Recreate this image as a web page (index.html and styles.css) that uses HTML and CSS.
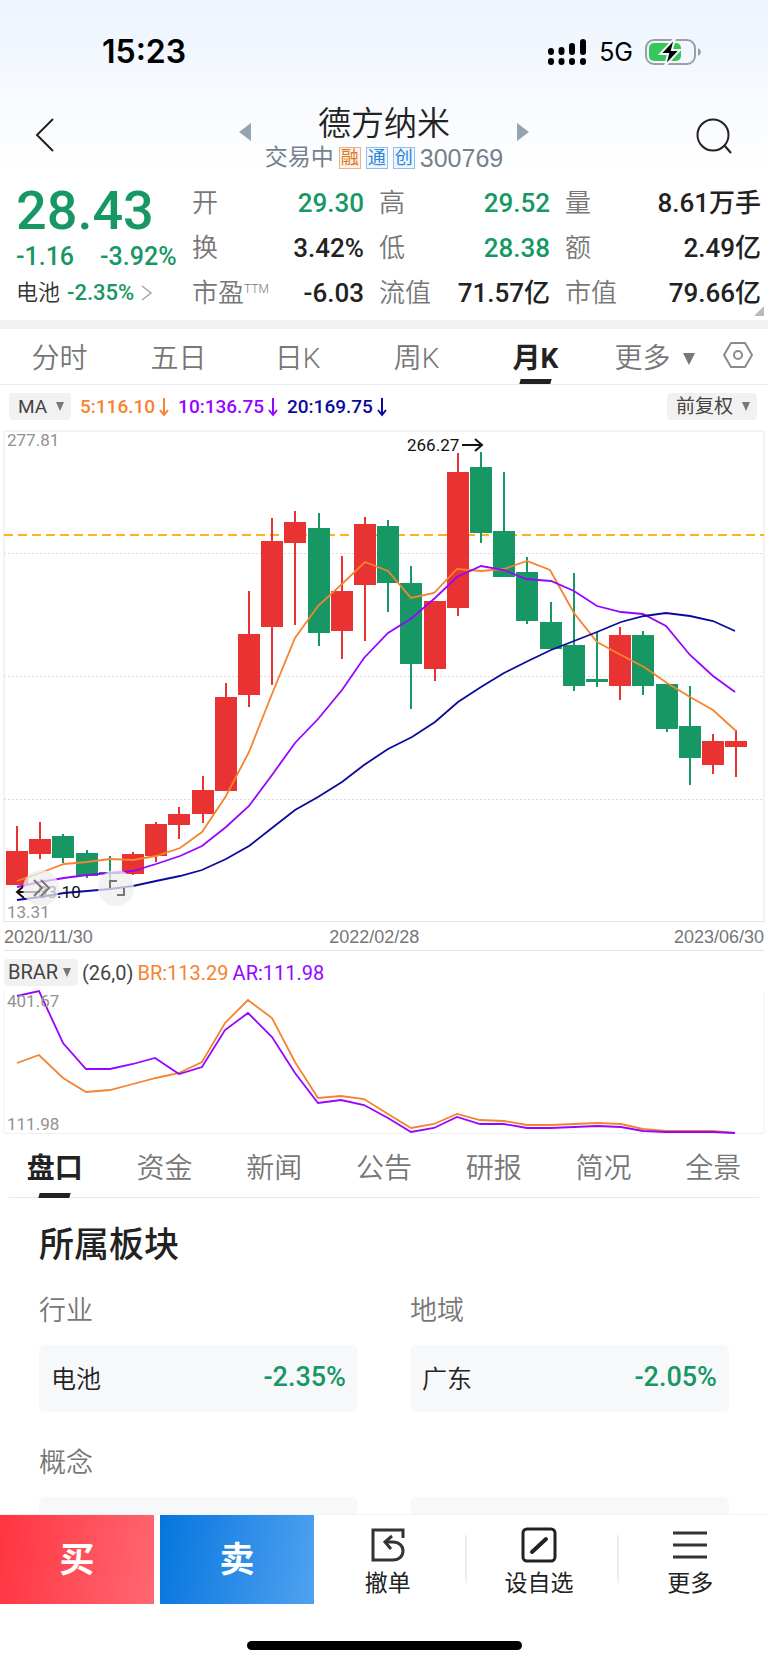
FILE: index.html
```html
<!DOCTYPE html>
<html lang="zh-CN">
<head>
    <meta charset="UTF-8">
    <meta name="viewport" content="width=device-width, initial-scale=1.0">
    <title>德方纳米 300769</title>
    <link rel="stylesheet" href="styles.css">
</head>
<body>
    <header class="top">
        <div class="status-bar">
            <span class="clock">15:23</span>
            <div class="status-icons">
                <svg width="40" height="28" viewBox="0 0 40 28">
                    <g stroke="#000" stroke-width="6" stroke-linecap="round">
                        <path d="M4 13v1M14.500 12v2M25 8v6M36 4v10"/>
                        <path d="M4 23v1M14.500 23v1M25 23v1M36 23v1"/>
                    </g>
                </svg>
                <span class="network">5G</span>
                <svg width="56" height="28" viewBox="0 0 56 28">
                    <rect x="1" y="2" width="49" height="24" rx="8" fill="none" stroke="#9a9ea5" stroke-width="2"/>
                    <path d="M53 10q3 1.500 3 4t-3 4z" fill="#9a9ea5"/>
                    <rect x="4" y="5" width="32" height="18" rx="5" fill="#34c759"/>
                    <path d="M30 0 15 16h8l-3 12 15-16h-8z" fill="#000" stroke="#f7faff" stroke-width="2"/>
                </svg>
            </div>
        </div>
        <div class="title-bar">
            <button class="icon-btn" aria-label="返回">
                <svg width="20" height="36" viewBox="0 0 20 36"><path d="M18 2 2 18l16 16" fill="none" stroke="#222" stroke-width="2"/></svg>
            </button>
            <div class="title-group">
                <button class="icon-btn" aria-label="上一只">
                    <svg width="12" height="18" viewBox="0 0 12 18"><path d="M12 0v18L0 9z" fill="#97a3ae"/></svg>
                </button>
                <div class="title">
                    <h1>德方纳米</h1>
                    <div class="subtitle">
                        <span>交易中</span>
                        <span class="tag tag-orange">融</span>
                        <span class="tag">通</span>
                        <span class="tag">创</span>
                        <span class="code">300769</span>
                    </div>
                </div>
                <button class="icon-btn" aria-label="下一只">
                    <svg width="12" height="18" viewBox="0 0 12 18"><path d="M0 0v18l12-9z" fill="#97a3ae"/></svg>
                </button>
            </div>
            <button class="icon-btn" aria-label="搜索">
                <svg width="38" height="38" viewBox="0 0 38 38" fill="none" stroke="#222" stroke-width="2"><circle cx="18" cy="18" r="15.500"/><path d="m29 28 7 8"/></svg>
            </button>
        </div>
    </header>

    <section class="quote">
        <div class="price-col">
            <div class="price">28.43</div>
            <div class="change"><span>-1.16</span><span>-3.92%</span></div>
            <a class="sector" href="#sectors">电池 <span class="sector-rate">-2.35%</span>
                <svg width="12" height="16" viewBox="0 0 12 16"><path d="m1 1 9 7-9 7" fill="none" stroke="#a0a8b0" stroke-width="1.500"/></svg>
            </a>
        </div>
        <dl class="stats">
            <div><dt>开</dt><dd class="down">29.30</dd></div>
            <div><dt>高</dt><dd class="down">29.52</dd></div>
            <div><dt>量</dt><dd>8.61万手</dd></div>
            <div><dt>换</dt><dd>3.42%</dd></div>
            <div><dt>低</dt><dd class="down">28.38</dd></div>
            <div><dt>额</dt><dd>2.49亿</dd></div>
            <div><dt>市盈<sup>TTM</sup></dt><dd>-6.03</dd></div>
            <div><dt>流值</dt><dd>71.57亿</dd></div>
            <div><dt>市值</dt><dd>79.66亿</dd></div>
        </dl>
    </section>

    <nav class="period-tabs">
        <button>分时</button>
        <button>五日</button>
        <button>日K</button>
        <button>周K</button>
        <button class="active">月K</button>
        <button>更多<i class="caret"></i></button>
        <button class="settings" aria-label="设置">
            <svg width="30" height="28" viewBox="0 0 30 28" fill="none" stroke="#8a8a8a" stroke-width="2"><path d="M8 2h14l7 12-7 12H8L1 14z"/><circle cx="15" cy="14" r="4"/></svg>
        </button>
    </nav>

    <section class="legend">
        <label class="picker"><select aria-label="主图指标"><option>MA</option></select></label>
        <span class="ma ma5">5:116.10<svg width="10" height="20" viewBox="0 0 10 20"><path d="M5 1v17M1 13l4 5 4-5"/></svg></span>
        <span class="ma ma10">10:136.75<svg width="10" height="20" viewBox="0 0 10 20"><path d="M5 1v17M1 13l4 5 4-5"/></svg></span>
        <span class="ma ma20">20:169.75<svg width="10" height="20" viewBox="0 0 10 20"><path d="M5 1v17M1 13l4 5 4-5"/></svg></span>
        <label class="picker adjust"><select aria-label="复权"><option>前复权</option></select></label>
    </section>

    <section class="chart">
        <svg class="plot" viewBox="0 0 768 492">
            <path class="frame" d="M4 492V1h760v491"/>
            <path class="frame" d="M4 491.500h760"/>
            <path class="grid" d="M4 123.500h760M4 246.500h760M4 369.500h760"/>
            <path class="cost" d="M4 105h760"/>
            <g id="candles"></g>
            <polyline class="line ma5" points="17,451 40,443 64,434 87,432 110,429 133,430 156,426 180,418 202,402 226,366 249,322 272,264 295,208 318,176 342,154 365,132 388,141 411,168 434,163 457,139 481,141 504,139 527,131 550,140 574,183 597,212 621,225 644,237 667,253 690,267 713,280 736,301"/>
            <polyline class="line ma10" points="17,457 40,452 64,448 87,445 110,443 133,441 156,434 180,426 202,416 226,397 249,376 272,345 295,313 318,289 342,260 364,228 388,203 412,188 435,168 457,147 481,136 504,140 526,149 551,151 574,161 597,176 621,182 643,184 666,196 690,225 713,246 735,262"/>
            <polyline class="line ma20" points="17,470 40,467 64,463 87,461 110,459 133,456 156,451 180,446 202,440 226,429 249,416 272,398 295,380 318,367 342,352 364,335 388,319 412,307 435,292 458,272 481,257 504,243 528,231 551,220 574,211 597,202 621,192 644,186 666,183 690,186 713,191 735,201"/>
            <text class="axis" x="7" y="16">277.81</text>
            <text class="axis" x="7" y="488">13.31</text>
            <text class="mark" x="407" y="21">266.27</text>
            <path class="arrow" d="M462 15h20M475 9l7 6-7 6"/>
            <text class="mark" x="38" y="468">33.10</text>
            <path class="arrow" d="M40 462H17M24 456l-7 6 7 6"/>
            <g class="tool">
                <circle cx="41" cy="458" r="18"/>
                <path d="m34 450 8 8-8 8M41 450l8 8-8 8"/>
            </g>
            <g class="tool">
                <circle cx="116" cy="458" r="18"/>
                <path d="M110 458v-7h7M117 465h7v-7"/>
            </g>
        </svg>
        <div class="dates"><span>2020/11/30</span><span class="mid">2022/02/28</span><span>2023/06/30</span></div>
    </section>

    <section class="legend legend-brar">
        <label class="picker"><select aria-label="副图指标"><option>BRAR</option></select></label>
        <span>(26,0)</span>
        <span class="ma5">BR:113.29</span>
        <span class="ma10">AR:111.98</span>
    </section>

    <section class="chart">
        <svg class="plot" viewBox="0 0 768 144">
            <path class="frame light" d="M4 1v142.500h760V1"/>
            <polyline class="line ma5" points="17,73 39,65 63,88 86,102 110,100 133,94 156,88 179,83 202,72 225,33 248,10 272,28 295,72 318,108 341,106 364,109 388,124 411,138 434,134 457,124 480,130 504,131 527,135 551,135 574,134 597,133 621,134 643,139 666,141 690,141 713,141 735,143"/>
            <polyline class="line ma10" points="17,6 39,1 63,53 86,79 110,79 133,74 155,68 179,84 202,77 225,40 248,23 272,47 295,83 318,113 341,110 364,115 388,128 411,142 434,138 457,127 480,134 504,134 527,138 551,138 574,137 597,136 621,137 643,141 666,142 690,142 713,142 735,143"/>
            <text class="axis" x="7" y="17">401.67</text>
            <text class="axis" x="7" y="140">111.98</text>
        </svg>
    </section>

    <nav class="info-tabs">
        <button class="active">盘口</button>
        <button>资金</button>
        <button>新闻</button>
        <button>公告</button>
        <button>研报</button>
        <button>简况</button>
        <button>全景</button>
    </nav>

    <main class="sectors" id="sectors">
        <h2>所属板块</h2>
        <div class="sector-grid">
            <div>
                <h3>行业</h3>
                <a class="card" href="#"><span>电池</span><span class="rate">-2.35%</span></a>
            </div>
            <div>
                <h3>地域</h3>
                <a class="card" href="#"><span>广东</span><span class="rate">-2.05%</span></a>
            </div>
        </div>
        <h3>概念</h3>
        <div class="sector-grid">
            <div class="card"></div>
            <div class="card"></div>
        </div>
    </main>

    <footer class="trade-bar">
        <div class="actions">
            <button class="buy">买</button>
            <button class="sell">卖</button>
            <div class="tools">
                <button>
                    <svg width="36" height="36" viewBox="0 0 36 36" fill="none" stroke="#333" stroke-width="3"><path d="M33 11V3H3v30h20c6 0 10-4 10-9s-4-9-10-9h-6"/><path d="m22 9-7 6 6 7"/></svg>
                    撤单
                </button>
                <button>
                    <svg width="36" height="36" viewBox="0 0 36 36" fill="none" stroke="#222" stroke-width="3"><rect x="2" y="2" width="32" height="32" rx="4"/><path d="M11 25 25 12" stroke-width="4" stroke-linecap="round"/></svg>
                    设自选
                </button>
                <button>
                    <svg width="36" height="36" viewBox="0 0 36 36" fill="none" stroke="#333" stroke-width="3"><path d="M1 6h34M1 18h34M1 30h34"/></svg>
                    更多
                </button>
            </div>
        </div>
        <div class="home-indicator"></div>
    </footer>

    <script src="script.js"></script>
</body>
</html>
```
FILE: script.js
```js
// [up, wick top, body top, body bottom, wick bottom] for each month
const candles = [
    [1, 396, 421, 455, 455], [1, 392, 409, 424, 429], [0, 404, 406, 428, 433], [0, 420, 423, 446, 448],
    [0, 426, 442, 444, 450], [1, 422, 424, 444, 445], [1, 392, 394, 426, 432], [1, 377, 384, 395, 409],
    [1, 346, 360, 384, 393], [1, 253, 267, 361, 361], [1, 161, 204, 265, 277], [1, 88, 111, 197, 255],
    [1, 81, 92, 113, 195], [0, 83, 98, 203, 216], [1, 126, 161, 201, 229], [1, 87, 94, 155, 211],
    [0, 90, 96, 153, 182], [0, 136, 153, 234, 279], [1, 171, 171, 239, 251], [1, 23, 42, 178, 186],
    [0, 22, 37, 103, 113], [0, 42, 101, 147, 147], [0, 127, 142, 191, 194], [0, 172, 192, 219, 219],
    [0, 143, 215, 256, 261], [0, 202, 249, 252, 257], [1, 197, 205, 256, 270], [0, 201, 205, 256, 265],
    [0, 254, 254, 299, 302], [0, 256, 296, 328, 355], [1, 304, 311, 335, 344], [1, 300, 311, 317, 347]
];

const step = 23.2;

document.getElementById('candles').innerHTML = candles.map(([up, high, top, bottom, low], i) => {
    const x = Math.round(17 + i * step);
    return `<g class="${up ? 'candle-up' : 'candle-down'}">
        <rect x="${x - 1}" y="${high}" width="2" height="${low - high}"/>
        <rect x="${x - 11}" y="${top}" width="22" height="${bottom - top}"/>
    </g>`;
}).join('');
```
FILE: styles.css
```css
:root {
    --green: #179764;
    --red: #e93232;
    --text: #222;
    --muted: #777;
    --orange: #f5832f;
    --purple: #9605ff;
    --navy: #0a0a9c;
    --chip: #f1f1f1;
}

* {
    margin: 0;
    padding: 0;
    box-sizing: border-box;
}

body {
    background: #fff;
    color: var(--text);
    font-family: Roboto, "Noto Sans CJK SC", sans-serif;
    padding-bottom: 90px;
}

button, select {
    font: inherit;
    color: inherit;
    background: none;
    border: none;
    cursor: pointer;
}

a {
    color: inherit;
    text-decoration: none;
}

svg {
    display: block;
}

/* header */
.top {
    height: 180px;
    background: linear-gradient(#edf4fe, #fff 172px);
}

.status-bar {
    height: 104px;
    padding: 0 67px 0 102px;
    display: flex;
    align-items: center;
    justify-content: space-between;
}

.clock {
    font: 600 32px/40px Inter, sans-serif;
    color: #000;
}

.status-icons {
    display: flex;
    align-items: center;
    gap: 12px;
}

.network {
    font: 400 25px/32px Inter, sans-serif;
    color: #000;
}

.title-bar {
    display: grid;
    grid-template-columns: 1fr auto 1fr;
    align-items: start;
    height: 76px;
    padding: 0 35px;
}

.icon-btn {
    display: flex;
    margin-top: 13px;
}

.icon-btn:last-child {
    justify-self: end;
}

.title-group {
    display: flex;
    justify-content: space-between;
    align-items: start;
    width: 290px;
}

.title-group .icon-btn {
    margin-top: 19px;
}

.title {
    text-align: center;
    white-space: nowrap;
}

h1 {
    font-size: 33px;
    line-height: 40px;
    font-weight: 350;
}

.subtitle {
    display: flex;
    align-items: center;
    justify-content: center;
    gap: 5px;
    color: #74818e;
    font-size: 23px;
    line-height: 28px;
}

.tag {
    width: 22px;
    height: 22px;
    border: 1px solid #8fbfea;
    background: #eef6fd;
    color: #2b86d9;
    font-size: 18px;
    line-height: 20px;
}

.tag-orange {
    border-color: #eab182;
    background: #fdf3ea;
    color: #dc7623;
}

.code {
    font-family: "Liberation Sans", sans-serif;
    font-size: 25px;
}

/* quote */
.quote {
    display: grid;
    grid-template-columns: 161fr 569fr;
    gap: 15px;
    height: 149px;
    padding: 0 7px 0 16px;
    border-bottom: 9px solid #f1f1f1;
    position: relative;
}

/* expand corner */
.quote::after {
    content: "";
    position: absolute;
    right: 4px;
    bottom: 4px;
    border-left: 10px solid transparent;
    border-bottom: 10px solid #b8b8b8;
}

.price-col {
    color: var(--green);
    font-weight: 500;
    white-space: nowrap;
}

.price {
    font-size: 54px;
    line-height: 62px;
}

.change {
    display: flex;
    gap: 26px;
    font-size: 25px;
    line-height: 30px;
}

.sector {
    display: flex;
    align-items: center;
    gap: 7px;
    font-size: 22px;
    line-height: 42px;
    font-weight: 350;
    color: #333;
}

.sector-rate {
    color: var(--green);
    font-weight: 500;
}

.stats {
    display: grid;
    grid-template-columns: 172fr 171fr 196fr;
    grid-template-rows: repeat(3, 45px);
    column-gap: 15px;
}

.stats div {
    display: flex;
    justify-content: space-between;
    font-size: 26px;
    line-height: 46px;
    white-space: nowrap;
}

.stats dt {
    color: var(--muted);
    font-weight: 350;
}

.stats dd {
    font-weight: 500;
}

.stats .down {
    color: var(--green);
}

sup {
    font-size: 12px;
    line-height: 12px;
    vertical-align: 9px;
}

/* period tabs */
.period-tabs {
    display: grid;
    grid-template-columns: repeat(6, 119fr) 54fr;
    height: 56px;
    border-bottom: 1px solid #e9e9f3;
    font-size: 28px;
    color: var(--muted);
}

.period-tabs button, .info-tabs button {
    display: flex;
    align-items: center;
    justify-content: center;
    position: relative;
    font-weight: 350;
}

.period-tabs button {
    padding-bottom: 2px;
}

.period-tabs .settings {
    padding: 0 6px 4px 0;
}

.period-tabs .active, .info-tabs .active {
    color: var(--text);
    font-weight: 700;
}

.active::after {
    content: "";
    position: absolute;
    left: calc(50% - 16px);
    bottom: 0;
    width: 31px;
    height: 5px;
    background: var(--text);
    transform: skewX(-15deg);
}

.caret {
    margin: 6px 0 0 12px;
    border: 6px solid transparent;
    border-top: 12px solid var(--muted);
    border-bottom: 0;
}

/* indicator legends */
.legend {
    display: flex;
    align-items: center;
    height: 45px;
    padding: 0 11px 2px 9px;
    gap: 9px;
    font-size: 19px;
    font-weight: 500;
}

.picker {
    display: flex;
    align-items: center;
    height: 27px;
    padding: 0 7px 0 9px;
    gap: 8px;
    background: var(--chip);
    border-radius: 4px;
}

.picker select {
    appearance: none;
    font-size: 19px;
    font-weight: 400;
    line-height: 27px;
    color: #444;
}

.picker::after {
    content: "";
    border: 4px solid transparent;
    border-top: 9px solid #777;
    border-bottom: 0;
}

.adjust {
    margin-left: auto;
}

.ma {
    display: flex;
    align-items: center;
    gap: 4px;
}

.ma svg {
    fill: none;
    stroke: currentColor;
    stroke-width: 2;
}

.ma5 {
    color: var(--orange);
}

.ma10 {
    color: var(--purple);
}

.ma20 {
    color: var(--navy);
}

.legend-brar {
    height: 39px;
    padding: 4px 4px 0;
    gap: 4px;
    font-size: 20px;
    font-weight: 400;
    color: #444;
}

.legend-brar .picker {
    padding-left: 4px;
    gap: 4px;
}

.legend-brar select {
    font-size: 20px;
}

/* charts */
.plot {
    width: 100%;
    height: auto;
    overflow: visible;
}

.frame {
    fill: none;
    stroke: #e6e6e6;
}

.light {
    stroke: #f0f0f0;
}

.grid {
    stroke: #ddd;
    stroke-dasharray: 2 2;
}

.cost {
    stroke: #ffb21a;
    stroke-width: 2;
    stroke-dasharray: 9 5;
}

.line {
    fill: none;
    stroke: currentColor;
    stroke-width: 1.8;
}

.candle-up {
    fill: var(--red);
}

.candle-down {
    fill: var(--green);
}

.axis, .mark {
    font-size: 17px;
    fill: #919191;
}

.mark {
    fill: #111;
}

.arrow {
    fill: none;
    stroke: #111;
    stroke-width: 2;
}

.tool circle {
    fill: #eee;
    opacity: .75;
}

.tool path {
    fill: none;
    stroke: #777;
    stroke-width: 2;
}

.dates {
    display: flex;
    justify-content: space-between;
    margin: 0 4px;
    padding-top: 2px;
    border-bottom: 1px solid #e2e2e2;
    font: 18px/26px "Liberation Sans", sans-serif;
    color: var(--muted);
}

.dates .mid {
    margin-right: 18px;
}

/* info tabs */
.info-tabs {
    display: grid;
    grid-template-columns: repeat(7, 1fr);
    height: 64px;
    font-size: 28px;
    color: var(--muted);
    background: linear-gradient(#e8e8e8, #e8e8e8) center bottom / calc(100% - 18px) 1px no-repeat;
}

/* sectors */
.sectors {
    padding: 23px 39px 0;
}

h2 {
    font-size: 35px;
    line-height: 50px;
    font-weight: 500;
}

h3 {
    font-size: 27px;
    line-height: 40px;
    font-weight: 350;
    color: var(--muted);
    margin: 20px 0 14px;
}

.sector-grid {
    display: grid;
    grid-template-columns: 1fr 1fr;
    gap: 52px;
    margin-bottom: 31px;
}

.card {
    display: flex;
    align-items: center;
    justify-content: space-between;
    height: 67px;
    padding: 0 12px 4px;
    background: #f7f8fa;
    border-radius: 6px;
    font-size: 25px;
    font-weight: 350;
}

.rate {
    color: var(--green);
    font-size: 27px;
    font-weight: 500;
}

/* trade bar */
.trade-bar {
    position: fixed;
    left: 0;
    right: 0;
    bottom: 0;
    height: 151px;
    background: #fff;
    border-top: 1px solid #f3f3f3;
}

.actions {
    display: grid;
    grid-template-columns: 154fr 160fr 454fr;
    height: 89px;
}

.buy, .sell {
    color: #fff;
    font-size: 35px;
    font-weight: 700;
    padding-bottom: 6px;
}

.buy {
    background: linear-gradient(100deg, #ff3440, #ff6872);
}

.sell {
    margin-left: 6px;
    background: linear-gradient(100deg, #0575de, #50a2f0);
}

.tools {
    display: grid;
    grid-template-columns: repeat(3, 1fr);
}

.tools button {
    display: flex;
    flex-direction: column;
    align-items: center;
    padding: 12px 4px 0 0;
    gap: 5px;
    font-size: 23px;
    line-height: 32px;
    background: linear-gradient(#eee, #eee) left 20px / 2px 48px no-repeat;
}

.tools button:first-child {
    background: none;
}

.home-indicator {
    width: 275px;
    height: 9px;
    margin: 37px auto 0;
    border-radius: 5px;
    background: #000;
}
```
